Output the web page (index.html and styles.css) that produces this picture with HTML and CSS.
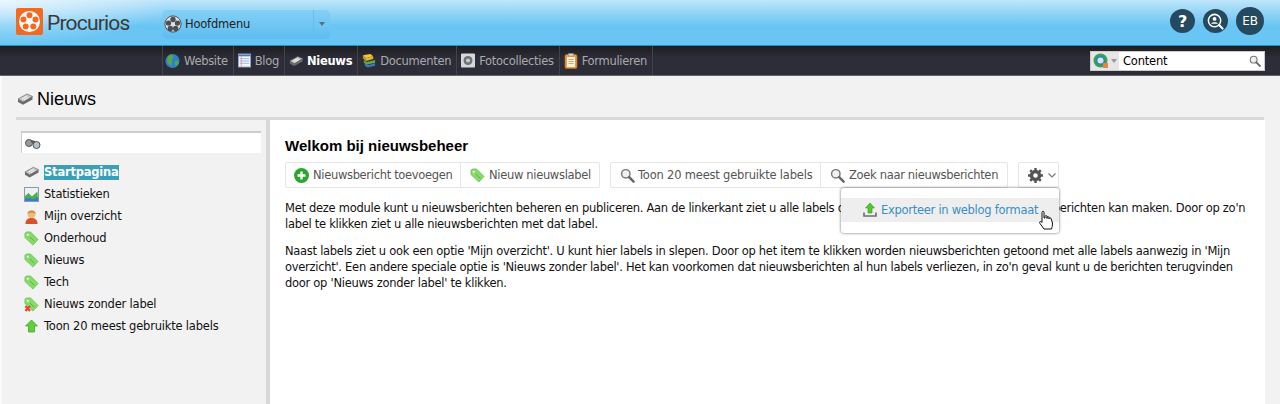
FILE: index.html
```html
<!DOCTYPE html>
<html lang="nl">
<head>
  <meta charset="UTF-8">
  <title>Nieuws</title>
  <link rel="stylesheet" href="styles.css">
</head>
<body>
  <svg class="defs" width="0" height="0">
    <symbol id="i-news" viewBox="0 0 16 12">
      <path d="M1 6 10 1 15.500 3.500 6 9Z" fill="#c6c6c6" stroke="#777" stroke-width=".8"/>
      <path d="M1 6 6 9 15.500 3.500V6.500L6 11.800 1 9Z" fill="#6a6a6a"/>
      <path d="M5 6 10 3M7 7 11.500 4.300" stroke="#fff" stroke-width=".9"/>
    </symbol>
    <symbol id="i-tag" viewBox="0 0 16 16">
      <path d="M1 2.500 2.500 1H7L15 9 9.500 15 1 7Z" fill="#86d96a" stroke="#6cc250" stroke-width=".8"/>
      <path d="M6.500 6.500 11 11" stroke="#5bb03f" stroke-width="1"/>
      <circle cx="4" cy="4" r="1.200" fill="#e9f8e0"/>
    </symbol>
    <symbol id="i-search" viewBox="0 0 16 16">
      <circle cx="6.200" cy="6.200" r="4.500" fill="#eef1f3" stroke="#777" stroke-width="1.500"/>
      <path d="M9.800 9.800 14.500 14.500" stroke="#666" stroke-width="2.600" stroke-linecap="round"/>
    </symbol>
    <symbol id="i-up" viewBox="0 0 14 14">
      <path d="M7 1 13 7H10V13H4V7H1Z" fill="#5fd03a" stroke="#3b9e22" stroke-width=".7"/>
    </symbol>
    <symbol id="i-reel" viewBox="0 0 20 20">
      <circle cx="10" cy="10" r="9" fill="#dfe3e6" stroke="#444" stroke-width="1"/>
      <g fill="#4b5056">
        <circle cx="10" cy="5" r="3"/><circle cx="15" cy="9" r="3"/><circle cx="13" cy="15" r="3"/>
        <circle cx="7" cy="15" r="3"/><circle cx="5" cy="9" r="3"/>
      </g>
    </symbol>
  </svg>

  <header class="topbar">
    <div class="logo">
      <svg class="logo-mark" viewBox="0 0 27 27" width="27" height="27">
        <rect width="27" height="27" rx="2" fill="#f26a21"/>
        <circle cx="13.500" cy="13.500" r="10.500" fill="#fff"/>
        <g fill="#f26a21">
          <circle cx="13.500" cy="7.300" r="3"/><circle cx="19.500" cy="11.500" r="3"/><circle cx="17.300" cy="18.600" r="3"/>
          <circle cx="9.700" cy="18.600" r="3"/><circle cx="7.500" cy="11.500" r="3"/>
        </g>
      </svg>
      <span class="logo-text">Procurios</span>
    </div>
    <div class="main-select">
      <span class="main-select-label">
        <svg class="ic-reel" width="18" height="18"><use href="#i-reel"/></svg>
        Hoofdmenu
      </span>
      <span class="main-select-arrow"></span>
    </div>
    <div class="top-actions">
      <span class="round">?</span>
      <span class="round">
        <svg viewBox="0 0 20 20" width="19" height="19">
          <circle cx="9" cy="9" r="6.500" fill="none" stroke="#fff" stroke-width="1.600"/>
          <circle cx="9" cy="7.300" r="2" fill="#fff"/>
          <path d="M5.500 12.300C6 10.300 12 10.300 12.500 12.300Z" fill="#fff"/>
          <path d="M13.800 13.800 17.500 17.500" stroke="#fff" stroke-width="2.200" stroke-linecap="round"/>
        </svg>
      </span>
      <span class="round round-user">EB</span>
    </div>
  </header>

  <nav class="navbar">
    <ul class="nav-items">
      <li>
        <svg width="15" height="16" viewBox="0 0 16 16">
          <circle cx="8" cy="8" r="7.500" fill="#2f7fd0"/>
          <path d="M5 1.500C9 1 10 4 8 6 6 8 8 10 7 13 4 12 2 9 2.500 6 3 4 4 2.500 5 1.500Z" fill="#5aa83c"/>
          <path d="M11 8C13 7 15 8 14.500 10 14 12 12 13 11 13 10.500 11 10 9.500 11 8Z" fill="#5aa83c"/>
        </svg>
        Website
      </li>
      <li>
        <svg width="13" height="15" viewBox="0 0 14 15">
          <rect x=".5" y=".5" width="13" height="14" fill="#f4f6fb" stroke="#8fa6c9"/>
          <path d="M.5 1H13.500V3H.5Z" fill="#4d79b8"/>
          <path d="M2 5.500H12M2 8H12M2 10.500H12" stroke="#9cb4d8"/>
          <path d="M3.500 3V14" stroke="#e59a9a"/>
        </svg>
        Blog
      </li>
      <li class="active">
        <svg width="14" height="12"><use href="#i-news"/></svg>
        Nieuws
      </li>
      <li>
        <svg width="14" height="15" viewBox="0 0 15 15">
          <path d="M1 2 9 .5 12 3 4 5Z" fill="#f0c832"/>
          <path d="M1 2 4 5V8L1 5Z" fill="#d29a1f"/>
          <path d="M4 5 12 3V6L4 8Z" fill="#e8b52a"/>
          <path d="M2 7 5 9 14 7V10L5 12 2 10Z" fill="#58ab4a"/>
          <path d="M3 10.500 6 12.500 14 10.500V13L6 15 3 13Z" fill="#3d78b8"/>
        </svg>
        Documenten
      </li>
      <li>
        <svg width="14" height="15" viewBox="0 0 15 15">
          <rect width="15" height="15" rx="1" fill="#d5d8da"/>
          <circle cx="7.500" cy="7.500" r="4.800" fill="#6d7276"/>
          <circle cx="7.500" cy="7.500" r="2.200" fill="#c5c9cc"/>
        </svg>
        Fotocollecties
      </li>
      <li>
        <svg width="14" height="16" viewBox="0 0 14 16">
          <rect x="1" y="1.500" width="12" height="14" rx="1.500" fill="#ee9a3c" stroke="#b96b1c" stroke-width=".7"/>
          <rect x="3" y="4" width="8" height="10" fill="#fbf2e2"/>
          <rect x="4.500" y=".5" width="5" height="2.500" fill="#d5d5d5" stroke="#888" stroke-width=".5"/>
          <path d="M4.500 6.500H9.500M4.500 8.500H9.500M4.500 10.500H9.500" stroke="#c9a777"/>
        </svg>
        Formulieren
      </li>
    </ul>
    <div class="global-search">
      <span class="global-search-scope">
        <svg width="16" height="16" viewBox="0 0 16 16">
          <circle cx="7.500" cy="7.500" r="7" fill="#3aa055"/>
          <circle cx="7.500" cy="7.500" r="3.800" fill="#cfe6f5" stroke="#2b7fc0" stroke-width="1.500"/>
          <rect x="10" y="10" width="5" height="5" fill="#e8853a"/>
        </svg>
        <span class="mini-arrow"></span>
      </span>
      <span class="global-search-value">Content</span>
      <svg class="global-search-icon" width="12" height="12"><use href="#i-search"/></svg>
    </div>
  </nav>

  <h1 class="page-title">
    <svg width="16" height="12"><use href="#i-news"/></svg>
    Nieuws
  </h1>

  <div class="layout">
    <aside class="sidebar">
      <div class="tree-filter">
        <svg width="16" height="12" viewBox="0 0 16 12">
          <circle cx="4" cy="5" r="3.500" fill="#9a9a9a" stroke="#555"/>
          <circle cx="11.500" cy="7" r="3.500" fill="#b5c2cc" stroke="#555"/>
          <path d="M6 3 10 4" stroke="#555" stroke-width="2"/>
        </svg>
      </div>
      <ul class="tree">
        <li>
          <svg width="15" height="12"><use href="#i-news"/></svg>
          <span class="selected">Startpagina</span>
        </li>
        <li>
          <svg width="15" height="15" viewBox="0 0 15 15">
            <rect x=".5" y=".5" width="14" height="14" fill="#edf1f5" stroke="#8a9aa8"/>
            <path d="M1 14V9L4.500 6 8 9.500 13.500 4.500 14 14Z" fill="#4bb04a"/>
            <path d="M1 14V11.500L6 11 9 12.500 14 10V14Z" fill="#2f7fd8"/>
          </svg>
          <span>Statistieken</span>
        </li>
        <li>
          <svg width="14" height="15" viewBox="0 0 14 15">
            <path d="M1 15C1 10 4 9 7 9S13 10 13 15Z" fill="#d9502b"/>
            <circle cx="7" cy="5" r="4" fill="#f2ba7b"/>
            <path d="M3 5C3 1 11 1 11 5 9 3 5 3 3 5Z" fill="#c97f2f"/>
          </svg>
          <span>Mijn overzicht</span>
        </li>
        <li><svg width="15" height="15"><use href="#i-tag"/></svg><span>Onderhoud</span></li>
        <li><svg width="15" height="15"><use href="#i-tag"/></svg><span>Nieuws</span></li>
        <li><svg width="15" height="15"><use href="#i-tag"/></svg><span>Tech</span></li>
        <li>
          <svg width="15" height="15" viewBox="0 0 15 15">
            <use href="#i-tag"/>
            <path d="M1.500 9 6 14M6 9 1.500 14" stroke="#e2472f" stroke-width="2.200"/>
          </svg>
          <span>Nieuws zonder label</span>
        </li>
        <li><svg width="14" height="14"><use href="#i-up"/></svg><span>Toon 20 meest gebruikte labels</span></li>
      </ul>
    </aside>

    <main class="content">
      <h2 class="content-title">Welkom bij nieuwsbeheer</h2>
      <div class="toolbar">
        <div class="btn-group">
          <button class="btn btn-add">
            <svg width="15" height="15" viewBox="0 0 15 15">
              <circle cx="7.500" cy="7.500" r="7.500" fill="#2aa52e"/>
              <path d="M7.500 3.500V11.500M3.500 7.500H11.500" stroke="#fff" stroke-width="2.400"/>
            </svg>
            Nieuwsbericht toevoegen
          </button>
          <button class="btn btn-label"><svg width="15" height="15"><use href="#i-tag"/></svg> Nieuw nieuwslabel</button>
        </div>
        <div class="btn-group">
          <button class="btn btn-top"><svg width="15" height="15"><use href="#i-search"/></svg> Toon 20 meest gebruikte labels</button>
          <button class="btn btn-find"><svg width="15" height="15"><use href="#i-search"/></svg> Zoek naar nieuwsberichten</button>
        </div>
        <div class="btn-group menu-wrap">
          <button class="btn btn-gear">
            <svg width="15" height="15" viewBox="0 0 15 15">
              <circle cx="7.500" cy="7.500" r="4" fill="none" stroke="#555" stroke-width="3.400"/>
              <path d="M7.500 0V15M0 7.500H15M2.200 2.200 12.800 12.800M12.800 2.200 2.200 12.800" stroke="#555" stroke-width="2.400" stroke-dasharray="2.400 10.200 2.400"/>
            </svg>
            <svg width="8" height="5" viewBox="0 0 8 5"><path d="M.5.500 4 4 7.500.500" fill="none" stroke="#777" stroke-width="1.200"/></svg>
          </button>
          <div class="menu">
            <div class="menu-item">
              <svg width="14" height="14" viewBox="0 0 14 14">
                <path d="M7 0 11.500 5H9V10H5V5H2.500Z" fill="#4fc92f" stroke="#2f9a1a" stroke-width=".6"/>
                <path d="M1 9.500V13H13V9.500" fill="none" stroke="#6d6d6d" stroke-width="1.600"/>
              </svg>
              Exporteer in weblog formaat
            </div>
            <svg class="hand" width="16" height="20" viewBox="0 0 16 20">
              <path d="M4 10V2.500C4 .8 6 .8 6 2.500V8L7 8V6.500C7 5.300 9 5.300 9 6.500V8.500V7.500C9 6.300 11 6.300 11 7.500V9V8.500C11 7.500 13 7.500 13 8.500L14.500 13C14.500 16 14 17 13.500 19H6L2 13.500C1 12 2 10.500 4 12.500Z" fill="#fff" stroke="#111" stroke-width="1"/>
            </svg>
          </div>
        </div>
      </div>
      <p class="intro">Met deze module kunt u nieuwsberichten beheren en publiceren. Aan de linkerkant ziet u alle labels die u hebt gemaakt waarmee u nieuwsberichten kan maken. Door op zo'n label te klikken ziet u alle nieuwsberichten met dat label.</p>
      <p>Naast labels ziet u ook een optie 'Mijn overzicht'. U kunt hier labels in slepen. Door op het item te klikken worden nieuwsberichten getoond met alle labels aanwezig in 'Mijn overzicht'. Een andere speciale optie is 'Nieuws zonder label'. Het kan voorkomen dat nieuwsberichten al hun labels verliezen, in zo'n geval kunt u de berichten terugvinden door op 'Nieuws zonder label' te klikken.</p>
    </main>
  </div>
</body>
</html>
```

FILE: styles.css
```css
html, body {
  margin: 0;
  padding: 0;
}
body {
  height: 404px;
  overflow: hidden;
  background-color: #f2f2f2;
  box-shadow: inset 2px 0 #fafafa;
  color: #111;
  font-family: "DejaVu Sans", Verdana, sans-serif;
  font-size: 11.500px;
  letter-spacing: -.2px;
}
ul {
  list-style: none;
  margin: 0;
  padding: 0;
}
.defs {
  position: absolute;
}
svg {
  flex: none;
}

/* top bar */
.topbar {
  display: flex;
  align-items: center;
  box-sizing: border-box;
  height: 46px;
  padding: 0 16px 3px 16px;
  background:
    radial-gradient(ellipse 170px 45px at 0 0, rgba(255, 255, 255, .7), rgba(255, 255, 255, 0)),
    linear-gradient(#bfe6fb 0, #8fd3f6 14px, #69c5f3 26px, #69c5f3 100%);
  border-bottom: 1px solid #2a8fb8;
}
.logo {
  display: flex;
  align-items: center;
  gap: 4px;
  width: 146px;
}
.logo-text {
  padding-top: 3px;
  font-family: Roboto, sans-serif;
  font-size: 21px;
  letter-spacing: -.8px;
  color: #3a3a3a;
}
.main-select {
  display: flex;
  align-self: flex-start;
  width: 168px;
  height: 29px;
  margin-top: 10px;
  border-radius: 5px;
  background: linear-gradient(#84cff6, #5cbef0);
}
.main-select-label {
  flex: 1;
  display: flex;
  align-items: center;
  gap: 3px;
  padding: 0 0 2px 2px;
  color: #222;
  border-right: 1px solid #6dbce6;
}
.main-select-arrow {
  width: 16px;
  position: relative;
}
.main-select-arrow::after, .mini-arrow::after {
  content: "";
  position: absolute;
  border-left: 3px solid transparent;
  border-right: 3px solid transparent;
  border-top: 4px solid #5d6f7c;
}
.main-select-arrow::after {
  left: 5px;
  top: 12px;
}
.top-actions {
  display: flex;
  align-items: center;
  gap: 8px;
  margin-left: auto;
}
.round {
  display: flex;
  align-items: center;
  justify-content: center;
  width: 25px;
  height: 24px;
  border-radius: 50%;
  background-color: #25495f;
  color: #fff;
  font-size: 16px;
  font-weight: bold;
}
.round-user {
  width: 28px;
  height: 28px;
  font-size: 12px;
  font-weight: normal;
}

/* dark nav */
.navbar {
  display: flex;
  align-items: center;
  justify-content: space-between;
  height: 29px;
  padding: 0 15px 0 162px;
  background: linear-gradient(#1c1c20, #2c2d38 40%);
  border-bottom: 1px solid #666;
}
.nav-items {
  display: flex;
  height: 100%;
  border-right: 1px solid #444;
}
.nav-items li {
  display: flex;
  align-items: center;
  gap: 4px;
  padding: 0 5px 0 4px;
  border-left: 1px solid #444;
  color: #aaa;
  letter-spacing: -.3px;
}
.nav-items li:first-child {
  padding-left: 2px;
}
.nav-items .active {
  color: #fff;
  font-weight: bold;
}
.global-search {
  display: flex;
  align-items: center;
  width: 175px;
  height: 20px;
  background-color: #fff;
  box-sizing: border-box;
  border: 1px solid #ccc;
}
.global-search-scope {
  display: flex;
  align-items: center;
  width: 28px;
  height: 100%;
  padding-left: 2px;
  box-sizing: border-box;
  background-color: #e6e6e6;
}
.mini-arrow {
  position: relative;
  width: 8px;
  height: 4px;
}
.mini-arrow::after {
  left: 2px;
  top: 0;
  border-top-color: #999;
}
.global-search-value {
  flex: 1;
  padding: 1px 0 0 4px;
  color: #000;
}
.global-search-icon {
  margin-right: 3px;
}

/* page */
.page-title {
  display: flex;
  align-items: center;
  gap: 4px;
  height: 36px;
  margin: 0 16px;
  border-bottom: 3px solid #d8d8d8;
  padding: 5px 0 0 1px;
  font-family: "Liberation Sans", Arial, sans-serif;
  font-size: 18px;
  font-weight: normal;
  letter-spacing: 0;
  color: #000;
}
.layout {
  display: flex;
  margin: 0 15px 0 16px;
  height: 284px;
}
.sidebar {
  width: 245px;
  padding: 11px 0 0 5px;
  border-right: 4px solid #d8d8d8;
}
.tree-filter {
  display: flex;
  align-items: center;
  width: 240px;
  height: 22px;
  box-sizing: border-box;
  padding: 2px 0 0 3px;
  background-color: #fff;
  border-top: 2px solid #ccc;
  border-left: 1px solid #ccc;
}
.tree {
  margin-top: 8px;
}
.tree li {
  display: flex;
  align-items: center;
  gap: 5px;
  height: 22px;
  padding-left: 3px;
  color: #111;
}
.tree li svg {
  width: 15px;
}
.selected {
  background-color: #3aa0b8;
  color: #fff;
  font-weight: bold;
  line-height: 15px;
}
.content {
  flex: 1;
  background-color: #fff;
  padding: 17px 15px 0 15px;
}
.content-title {
  margin: 0 0 7px;
  font-family: "Liberation Sans", Arial, sans-serif;
  font-size: 15px;
  line-height: 18px;
  letter-spacing: 0;
  color: #000;
}
.toolbar {
  display: flex;
  gap: 10px;
  height: 26px;
}
.btn-group {
  display: flex;
}
.btn {
  display: flex;
  align-items: center;
  gap: 4px;
  height: 26px;
  padding: 0 0 0 9px;
  background-color: #fff;
  border: 1px solid #e6e6e6;
  border-left-width: 0;
  color: #555;
  font-family: inherit;
  font-size: inherit;
  letter-spacing: inherit;
}
.btn:first-child {
  border-left-width: 1px;
  border-radius: 2px 0 0 2px;
}
.btn:last-child {
  border-radius: 0 2px 2px 0;
}
.btn-add {
  width: 176px;
  padding-left: 8px;
  letter-spacing: -.32px;
}
.btn-label {
  width: 139px;
  letter-spacing: -.32px;
}
.btn-top {
  width: 211px;
  gap: 3px;
}
.btn-find {
  width: 187px;
  letter-spacing: -.32px;
}
.btn-gear {
  width: 41px;
  gap: 5px;
  border-radius: 2px;
}
.menu-wrap {
  position: relative;
}
.menu {
  position: absolute;
  top: 26px;
  right: 0;
  width: 218px;
  height: 45px;
  box-sizing: border-box;
  padding-top: 10px;
  background-color: #fff;
  border-radius: 3px;
  box-shadow: 0 0 3px rgba(0, 0, 0, .6);
}
.menu-item {
  display: flex;
  align-items: center;
  gap: 4px;
  height: 24px;
  padding-left: 22px;
  background-color: #eee;
  color: #3a8fc4;
  letter-spacing: -.28px;
}
.hand {
  position: absolute;
  left: 197px;
  top: 22px;
}
p {
  margin: 11px 0 0;
  line-height: 16px;
  letter-spacing: -.28px;
  color: #111;
}
.intro {
  margin-top: 12px;
}
```
